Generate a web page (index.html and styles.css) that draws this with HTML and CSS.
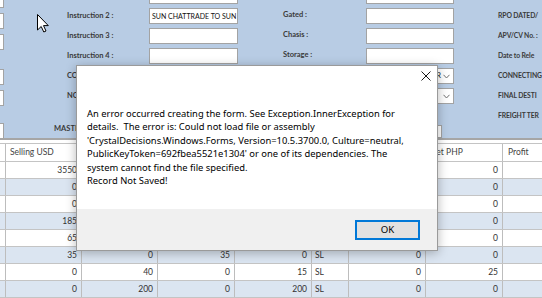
FILE: index.html
```html
<!DOCTYPE html>
<html>
<head>
<meta charset="utf-8">
<link rel="stylesheet" href="styles.css">
</head>
<body>
<div class="screen">
  <div class="form">
    <div class="col col-left">
      <div class="tb edge cut"></div>
      <div class="tb edge"></div>
      <div class="tb edge"></div>
      <div class="tb edge gap14"></div>
      <div class="tb edge"></div>
      <div class="tb edge gap12"></div>
    </div>
    <div class="col col-lab1">
      <div class="lab ind">Instruction 2 :</div>
      <div class="lab ind">Instruction 3 :</div>
      <div class="lab ind">Instruction 4 :</div>
      <div class="lab ind">CO</div>
      <div class="lab ind">NO</div>
      <div class="lab master">MASTE</div>
    </div>
    <div class="col col-box1">
      <div class="tb top"></div>
      <div class="tb">SUN CHATTRADE TO SUN</div>
      <div class="tb"></div>
      <div class="tb"></div>
    </div>
    <div class="col col-lab2">
      <div class="lab">Gated :</div>
      <div class="lab">Chasis :</div>
      <div class="lab">Storage :</div>
    </div>
    <div class="col col-box2">
      <div class="tb top"></div>
      <div class="tb"></div>
      <div class="tb"></div>
      <div class="tb"></div>
      <div class="tb dd"><span class="dd-text">R</span><svg class="chev" width="7" height="5" viewBox="0 0 7 5"><polyline points="0.5,0.8 3.5,4 6.5,0.8" fill="none" stroke="#707070" stroke-width="1"/></svg></div>
      <div class="tb dd"><span class="dd-text"></span><svg class="chev" width="7" height="5" viewBox="0 0 7 5"><polyline points="0.5,0.8 3.5,4 6.5,0.8" fill="none" stroke="#707070" stroke-width="1"/></svg></div>
      <div class="tb small"></div>
    </div>
    <div class="col col-lab3">
      <div class="lab">RPO DATED/</div>
      <div class="lab">APV/CV No. :</div>
      <div class="lab">Date to Rele</div>
      <div class="lab">CONNECTING</div>
      <div class="lab">FINAL DESTI</div>
      <div class="lab">FREIGHT TER</div>
    </div>
  </div>

  <div class="grid">
    <div class="row head">
      <div class="cell c0"></div>
      <div class="cell c1 txt">Selling USD</div>
      <div class="cell c2 txt"></div>
      <div class="cell c3 txt"></div>
      <div class="cell c4 txt"></div>
      <div class="cell c5 txt"></div>
      <div class="cell c6 txt"></div>
      <div class="cell c7 txt">Net PHP</div>
      <div class="cell c8 txt">Profit</div>
    </div>
    <div class="row">
      <div class="cell c0"></div><div class="cell c1">3550</div><div class="cell c2"></div><div class="cell c3"></div><div class="cell c4"></div><div class="cell c5 txt"></div><div class="cell c6"></div><div class="cell c7">0</div><div class="cell c8"></div>
    </div>
    <div class="row alt">
      <div class="cell c0"></div><div class="cell c1">0</div><div class="cell c2"></div><div class="cell c3"></div><div class="cell c4"></div><div class="cell c5 txt"></div><div class="cell c6"></div><div class="cell c7">0</div><div class="cell c8"></div>
    </div>
    <div class="row">
      <div class="cell c0"></div><div class="cell c1">0</div><div class="cell c2"></div><div class="cell c3"></div><div class="cell c4"></div><div class="cell c5 txt"></div><div class="cell c6"></div><div class="cell c7">0</div><div class="cell c8"></div>
    </div>
    <div class="row alt">
      <div class="cell c0"></div><div class="cell c1">185</div><div class="cell c2"></div><div class="cell c3"></div><div class="cell c4"></div><div class="cell c5 txt"></div><div class="cell c6"></div><div class="cell c7">0</div><div class="cell c8"></div>
    </div>
    <div class="row">
      <div class="cell c0"></div><div class="cell c1">65</div><div class="cell c2"></div><div class="cell c3"></div><div class="cell c4"></div><div class="cell c5 txt"></div><div class="cell c6"></div><div class="cell c7">0</div><div class="cell c8"></div>
    </div>
    <div class="row alt">
      <div class="cell c0"></div><div class="cell c1">35</div><div class="cell c2">0</div><div class="cell c3">35</div><div class="cell c4">0</div><div class="cell c5 txt">SL</div><div class="cell c6">0</div><div class="cell c7">0</div><div class="cell c8"></div>
    </div>
    <div class="row">
      <div class="cell c0"></div><div class="cell c1">0</div><div class="cell c2">40</div><div class="cell c3">0</div><div class="cell c4">15</div><div class="cell c5 txt">SL</div><div class="cell c6">0</div><div class="cell c7">25</div><div class="cell c8"></div>
    </div>
    <div class="row alt">
      <div class="cell c0"></div><div class="cell c1">0</div><div class="cell c2">200</div><div class="cell c3">0</div><div class="cell c4">200</div><div class="cell c5 txt">SL</div><div class="cell c6">0</div><div class="cell c7">0</div><div class="cell c8"></div>
    </div>
  </div>

  <div class="dialog">
    <div class="dlg-head">
      <svg class="close" width="10" height="10" viewBox="0 0 10 10"><path d="M0.5,0.5 L9.5,9.5 M9.5,0.5 L0.5,9.5" stroke="#1a1a1a" stroke-width="1" fill="none"/></svg>
    </div>
    <div class="dlg-msg">An error occurred creating the form. See Exception.InnerException for<br>details.&nbsp; The error is: Could not load file or assembly<br>'CrystalDecisions.Windows.Forms, Version=10.5.3700.0, Culture=neutral,<br>PublicKeyToken=692fbea5521e1304' or one of its dependencies. The<br>system cannot find the file specified.<br>Record Not Saved!</div>
    <div class="dlg-foot">
      <div class="btn">OK</div>
    </div>
  </div>

  <svg class="cursor" width="12" height="19" viewBox="0 0 12 19"><path d="M0.5,0.5 L0.5,16 L4.2,12.5 L6.8,18 L9,17 L6.5,11.6 L11.3,11.6 Z" fill="#fff" stroke="#000" stroke-width="1" stroke-linejoin="round"/></svg>
</div>
</body>
</html>
```
FILE: styles.css
```css
html, body {
  margin: 0;
  padding: 0;
}
body {
  width: 542px;
  height: 298px;
  overflow: hidden;
  background: #ffffff;
}
.screen {
  position: relative;
  width: 542px;
  height: 298px;
  overflow: hidden;
  font-family: "Lato", "Liberation Sans", sans-serif;
}

/* ---------- form ---------- */
.form {
  display: flex;
  height: 138px;
  background: #b8cce4;
  border-bottom: 2px solid #a6a6a6;
  overflow: hidden;
}
.col {
  display: flex;
  flex-direction: column;
  flex: none;
}
.tb {
  box-sizing: border-box;
  height: 16px;
  background: #ffffff;
  border: 1px solid #a3a3a3;
  font-size: 7px;
  line-height: 14px;
  padding-left: 2px;
  color: #111;
  white-space: nowrap;
  overflow: hidden;
  flex: none;
}
.col-left {
  width: 4px;
  gap: 5px;
}
.tb.edge {
  border-left: none;
  padding: 0;
}
.tb.cut { margin-top: -8px; }
.tb.gap14 { margin-top: 14px; }
.tb.gap12 { margin-top: 12px; }

.col-lab1 {
  margin-left: 50px;
  width: 95px;
  padding-top: 6px;
}
.lab {
  height: 20px;
  line-height: 20px;
  font-size: 7.5px;
  font-weight: 700;
  color: #3a3a3a;
  white-space: nowrap;
}
.lab.ind { margin-left: 13px; }
.lab.master { margin-top: 13px; }

.col-box1 {
  width: 89px;
  gap: 4px;
}
.tb.top { margin-top: -12px; }

.col-lab2 {
  margin-left: 45px;
  width: 83px;
  padding-top: 5px;
}
.col-box2 {
  width: 88px;
  gap: 4px;
}
.tb.dd {
  display: flex;
  align-items: center;
  padding: 0 3px 0 2px;
}
.dd-text {
  flex: 1;
  text-align: right;
  padding-right: 2px;
  font-size: 7.5px;
}
.chev { flex: none; }
.tb.small {
  width: 76px;
  height: 13px;
  margin-top: 17px;
}
.col-lab3 {
  margin-left: 44px;
  width: 44px;
  padding-top: 5px;
}
.col-lab3 .lab {
  font-size: 6.8px;
  letter-spacing: -0.1px;
}

/* ---------- datasheet ---------- */
.grid {
  margin-top: 3px;
  font-size: 8.5px;
  color: #333333;
}
.row {
  display: flex;
  box-sizing: border-box;
  height: 17px;
  background: #ffffff;
  border-bottom: 1px solid #c4c4c4;
}
.row.alt { background: #dbe5f1; }
.row.head {
  height: 19px;
  border-top: 1px solid #c4c4c4;
  background: #ffffff;
}
.cell {
  box-sizing: border-box;
  flex: none;
  border-right: 1px solid #bdbdbd;
  padding: 0 4px;
  text-align: right;
  line-height: 16px;
  white-space: nowrap;
  overflow: hidden;
}
.head .cell { line-height: 17px; color: #444; }
.cell.txt { text-align: left; }
.c0 { width: 6px; padding: 0; }
.c1 { width: 76px; }
.c2 { width: 76px; }
.c3 { width: 77px; }
.c4 { width: 77px; }
.c5 { width: 37px; padding-left: 3px; }
.c6 { width: 77px; }
.c7 { width: 77px; }
.c8 { flex: 1; border-right: none; padding-left: 5px; }

/* ---------- message box ---------- */
.dialog {
  position: absolute;
  left: 76px;
  top: 65px;
  width: 362px;
  height: 186px;
  box-sizing: border-box;
  background: #ffffff;
  border: 1px solid #9a9a9a;
  box-shadow: 0 2px 10px rgba(0, 0, 0, 0.28);
  display: flex;
  flex-direction: column;
  font-family: "Noto Sans", "Open Sans", sans-serif;
  color: #000;
}
.dlg-head {
  height: 20px;
  display: flex;
  justify-content: flex-end;
  align-items: center;
  padding-right: 6px;
}
.close { display: block; }
.dlg-msg {
  flex: 1;
  padding: 21px 0 0 10px;
  font-size: 9.4px;
  line-height: 13.4px;
  white-space: nowrap;
}
.dlg-foot {
  height: 41px;
  background: #f0f0f0;
  display: flex;
  align-items: center;
  justify-content: flex-end;
  padding-right: 17px;
}
.btn {
  box-sizing: border-box;
  width: 65px;
  height: 20px;
  background: #e1e1e1;
  border: 1px solid #0078d7;
  box-shadow: inset 0 0 0 1px #0078d7;
  font-size: 9.6px;
  line-height: 18px;
  text-align: center;
}

.cursor {
  position: absolute;
  left: 37px;
  top: 14px;
}
```
